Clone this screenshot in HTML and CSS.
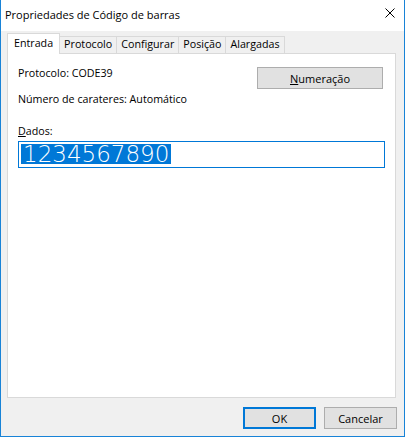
FILE: index.html
```html
<!DOCTYPE html>
<html lang="pt">
<head>
  <meta charset="UTF-8" />
  <title>Propriedades de Código de barras</title>
  <link rel="stylesheet" href="styles.css">
</head>
<body>

  <div class="window">
    <div class="titlebar">
      <span class="title">Propriedades de Código de barras</span>
      <span class="close">
        <svg width="10" height="10" viewBox="0 0 10 10">
          <path d="M0.5 0.5 L9.5 9.5 M9.5 0.5 L0.5 9.5" stroke="#000" stroke-width="1" fill="none"/>
        </svg>
      </span>
    </div>

    <div class="tabs">
      <div class="tab active">Entrada</div>
      <div class="tab">Protocolo</div>
      <div class="tab">Configurar</div>
      <div class="tab">Posição</div>
      <div class="tab">Alargadas</div>
    </div>

    <!-- Entrada tab -->
    <div class="panel">
      <div class="row">
        <div class="info">Protocolo: CODE39</div>
        <button class="btn wide"><u>N</u>umeração</button>
      </div>
      <div class="info chars">Número de carateres: Automático</div>

      <div class="label"><u>D</u>ados:</div>
      <div class="data-box">
        <span class="selected">1234567890</span>
      </div>
    </div>

    <div class="footer">
      <button class="btn default">OK</button>
      <button class="btn">Cancelar</button>
    </div>
  </div>

</body>
</html>
```

FILE: styles.css
```css
body {
  margin: 0;
  background: #f0f0f0;
  font-family: 'Segoe UI', 'Open Sans', sans-serif;
  font-size: 10.7px;
  color: #000;
}

.window {
  width: 405px;
  height: 437px;
  box-sizing: border-box;
  border: 1px solid #1883d7;
  border-top: none;
  background: #f0f0f0;
  display: flex;
  flex-direction: column;
}

.titlebar {
  height: 31px;
  background: #fff;
  display: flex;
  align-items: center;
  justify-content: space-between;
  padding: 0 9px 0 4px;
  font-size: 11px;
}

.title {
  margin-top: -2px;
}

.close {
  display: flex;
  margin-top: -5px;
}

.tabs {
  display: flex;
  align-items: flex-end;
  margin: 2px 0 0 6px;
  position: relative;
  z-index: 1;
}

.tab {
  height: 16px;
  line-height: 15px;
  padding: 0 4px;
  border: 1px solid #d9d9d9;
  border-bottom: none;
  background: #f0f0f0;
  margin-left: -1px;
}

.tab.active {
  height: 20px;
  line-height: 19px;
  padding: 0 6px;
  margin-left: 0;
  margin-bottom: -1px;
  background: #fff;
}

.panel {
  height: 345px;
  margin: 0 8px 0 6px;
  padding: 12px 10px 0 10px;
  box-sizing: border-box;
  background: #fff;
  border: 1px solid #d9d9d9;
}

.row {
  display: flex;
  justify-content: space-between;
  align-items: flex-start;
}

.info {
  line-height: 15px;
}

.chars {
  margin-top: 3px;
}

.label {
  line-height: 15px;
  margin-top: 17px;
}

.btn {
  font-family: inherit;
  font-size: 11px;
  color: #000;
  background: #e1e1e1;
  border: 1px solid #adadad;
  width: 73px;
  height: 22px;
  padding: 0;
  margin: 0;
}

.btn.wide {
  width: 126px;
  margin: 1px 2px 0 0;
}

.btn.default {
  border: 2px solid #0078d7;
}

.data-box {
  margin-top: 2px;
  height: 27px;
  box-sizing: border-box;
  width: 367px;
  border: 1px solid #0078d7;
  padding: 2px 0 0 2px;
}

.selected {
  display: inline-block;
  height: 20px;
  line-height: 20px;
  padding: 0 2px;
  background: #0078d7;
  color: #fff;
  font-family: 'DejaVu Sans', sans-serif;
  font-weight: 200;
  font-size: 23px;
  vertical-align: top;
}

.footer {
  display: flex;
  justify-content: flex-end;
  gap: 8px;
  margin: 9px 7px 0 0;
}
```
